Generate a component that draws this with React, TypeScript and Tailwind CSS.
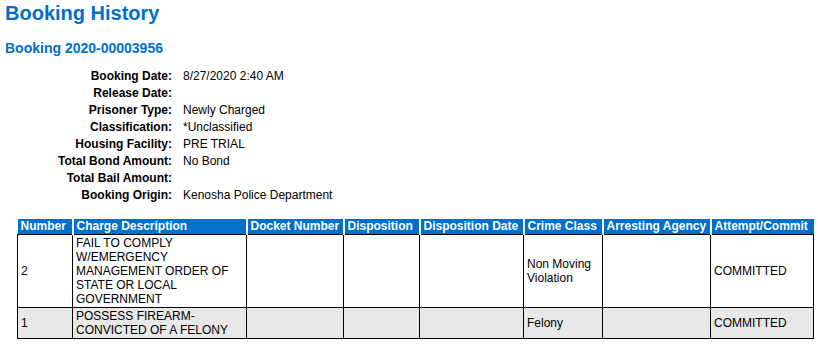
import React from 'react';

const INFO: [string, string][] = [
  ['Booking Date:', '8/27/2020 2:40 AM'],
  ['Release Date:', ''],
  ['Prisoner Type:', 'Newly Charged'],
  ['Classification:', '*Unclassified'],
  ['Housing Facility:', 'PRE TRIAL'],
  ['Total Bond Amount:', 'No Bond'],
  ['Total Bail Amount:', ''],
  ['Booking Origin:', 'Kenosha Police Department'],
];

const COLS: [string, number][] = [
  ['Number', 55],
  ['Charge Description', 174],
  ['Docket Number', 97],
  ['Disposition', 76],
  ['Disposition Date', 104],
  ['Crime Class', 79],
  ['Arresting Agency', 108],
  ['Attempt/Commit', 103],
];

const CHARGES = [
  {
    num: '2',
    desc: ['FAIL TO COMPLY', 'W/EMERGENCY', 'MANAGEMENT ORDER OF', 'STATE OR LOCAL', 'GOVERNMENT'],
    cls: ['Non Moving', 'Violation'],
    ac: 'COMMITTED',
  },
  {
    num: '1',
    desc: ['POSSESS FIREARM-', 'CONVICTED OF A FELONY'],
    cls: ['Felony'],
    ac: 'COMMITTED',
  },
];

const App: React.FC = () => {
  return (
    <div className="w-[818px] h-[346px] bg-white text-black font-['Liberation_Sans',Arial,sans-serif] overflow-hidden">
      <h1 className="pl-[5px] pt-[2px] text-[20px] leading-[22px] font-bold text-[#0070c9]">Booking History</h1>
      <h2 className="pl-[5px] mt-[16px] text-[14px] leading-[16px] font-bold text-[#0070c9]">Booking 2020-00003956</h2>

      <div className="mt-[12px] grid grid-cols-[172px_1fr] gap-x-[11px] text-[12px] leading-[17px]">
        {INFO.map(([label, value]) => (
          <React.Fragment key={label}>
            <div className="text-right font-bold">{label}</div>
            <div>{value}</div>
          </React.Fragment>
        ))}
      </div>

      {/* charges */}
      <table className="ml-[17px] mt-[15px] border-collapse text-[12px] leading-[14px]">
        <thead>
          <tr className="bg-[#0070c9] text-white">
            {COLS.map(([name, w]) => (
              <th
                key={name}
                style={{ width: w }}
                className="border-x-2 border-white first:border-l-0 last:border-r-0 px-[3px] h-[15px] py-0 text-left font-bold whitespace-nowrap"
              >
                {name}
              </th>
            ))}
          </tr>
        </thead>
        <tbody>
          {CHARGES.map((c, i) => (
            <tr key={c.num} className={i % 2 === 1 ? 'bg-[#e8e8e8]' : 'bg-white'}>
              <td className="border border-black px-[3px] py-[1px] align-middle">{c.num}</td>
              <td className="border border-black px-[3px] py-[1px] align-middle">
                {c.desc.map(l => (
                  <div key={l}>{l}</div>
                ))}
              </td>
              <td className="border border-black" />
              <td className="border border-black" />
              <td className="border border-black" />
              <td className="border border-black px-[3px] py-[1px] align-middle">
                {c.cls.map(l => (
                  <div key={l}>{l}</div>
                ))}
              </td>
              <td className="border border-black" />
              <td className="border border-black px-[3px] py-[1px] align-middle">{c.ac}</td>
            </tr>
          ))}
        </tbody>
      </table>
    </div>
  );
};

export default App;
